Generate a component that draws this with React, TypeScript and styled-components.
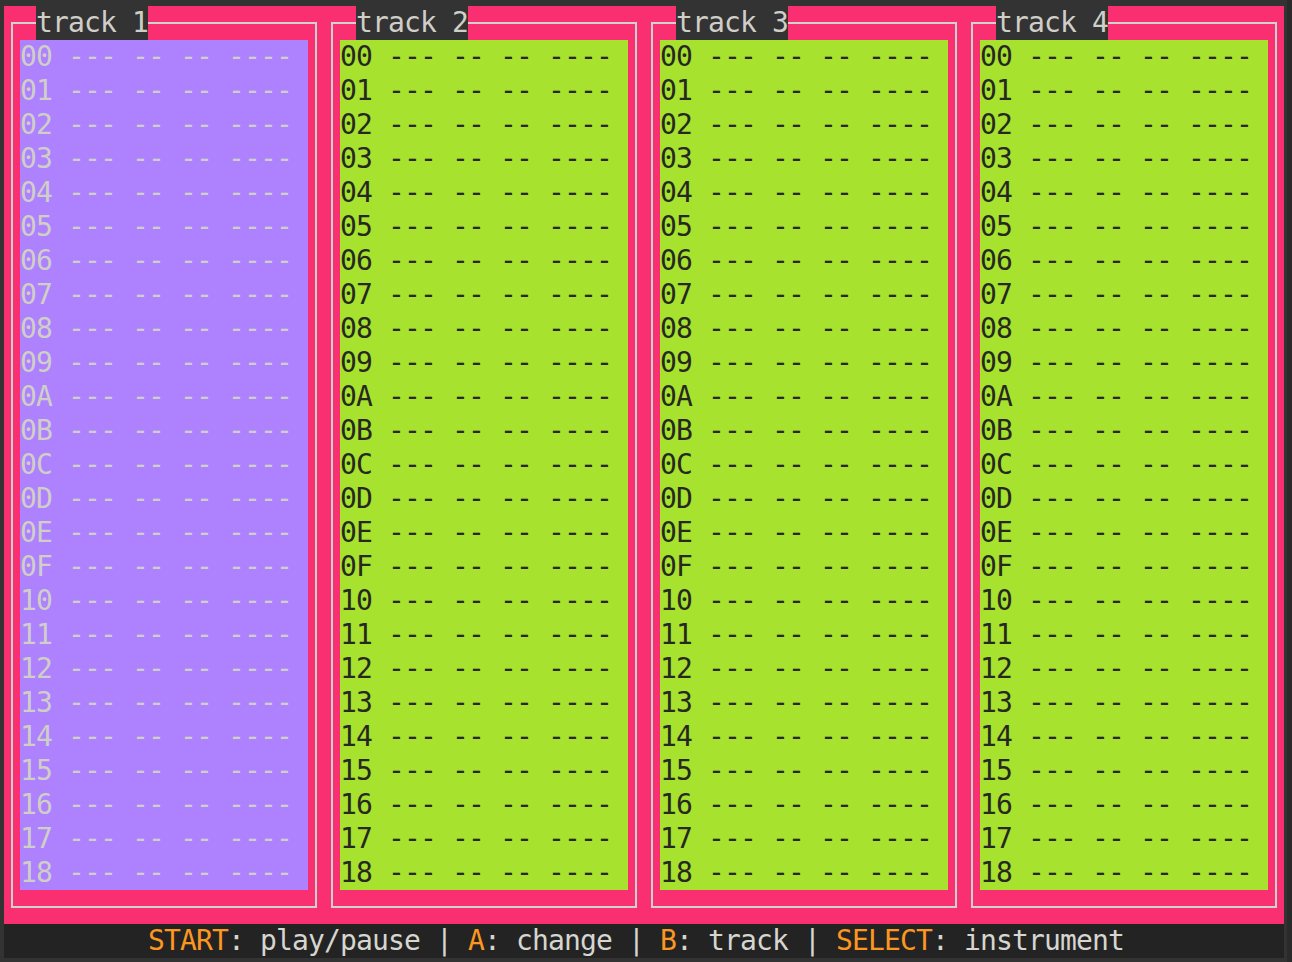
import React from "react";
import styled, { createGlobalStyle } from "styled-components";

const CELL_W = 16;
const CELL_H = 34;
const FONT_SIZE = 28;
// DejaVu Sans Mono advance = 1233/2048 em; adjust so each cell is exactly 16px
const LETTER_SPACING = CELL_W - (FONT_SIZE * 1233) / 2048;

const GlobalStyle = createGlobalStyle`
  html, body {
    margin: 0;
    padding: 0;
    background: #333333;
  }
  * { box-sizing: border-box; }
`;

const Screen = styled.div`
  width: 1292px;
  height: 962px;
  padding: 6px 8px 4px 4px;
  background: #333333;
  box-shadow: inset -5px 0 0 #2a2a2a;
  font-family: "DejaVu Sans Mono", "Liberation Mono", monospace;
  font-size: ${FONT_SIZE}px;
  letter-spacing: ${LETTER_SPACING}px;
  line-height: ${CELL_H}px;
`;

const Terminal = styled.div`
  width: 1280px;
  display: flex;
  flex-direction: column;
  background: #f92f72;
`;

const TrackRow = styled.div`
  display: flex;
  height: ${CELL_H * 27}px;
`;

const Track = styled.section`
  width: ${CELL_W * 20}px;
  padding: 16px 7px;
  display: flex;
`;

const Frame = styled.div`
  flex: 1;
  border: 2px solid #d2d2cc;
  display: flex;
  flex-direction: column;
`;

const Title = styled.div`
  align-self: flex-start;
  margin-top: -18px;
  margin-left: 23px;
  height: ${CELL_H}px;
  background: #333333;
  color: #cfcfc8;
  white-space: pre;
`;

const Pattern = styled.div<{ $active: boolean }>`
  margin: 0 7px 16px;
  height: ${CELL_H * 25}px;
  background: ${(p) => (p.$active ? "#ae81ff" : "#a6e22e")};
  color: ${(p) => (p.$active ? "#cfcfc6" : "#272822")};
  display: flex;
  flex-direction: column;
`;

const Step = styled.div`
  height: ${CELL_H}px;
  white-space: pre;
`;

const StatusBar = styled.div`
  height: ${CELL_H}px;
  background: #232323;
  color: #d6d6d0;
  padding-left: ${CELL_W * 9}px;
  white-space: pre;
`;

const Key = styled.span`
  color: #fd971f;
`;

const steps = Array.from({ length: 25 }, (_, i) =>
  i.toString(16).toUpperCase().padStart(2, "0")
);

const tracks = [1, 2, 3, 4];

export default function App() {
  return (
    <>
      <GlobalStyle />
      <Screen>
        <Terminal>
          <TrackRow>
            {tracks.map((t) => (
              <Track key={t}>
                <Frame>
                  <Title>{`track ${t}`}</Title>
                  <Pattern $active={t === 1}>
                    {steps.map((s) => (
                      <Step key={s}>{`${s} --- -- -- ----`}</Step>
                    ))}
                  </Pattern>
                </Frame>
              </Track>
            ))}
          </TrackRow>
          <StatusBar>
            <Key>START</Key>: play/pause | <Key>A</Key>: change | <Key>B</Key>: track |{" "}
            <Key>SELECT</Key>: instrument
          </StatusBar>
        </Terminal>
      </Screen>
    </>
  );
}
